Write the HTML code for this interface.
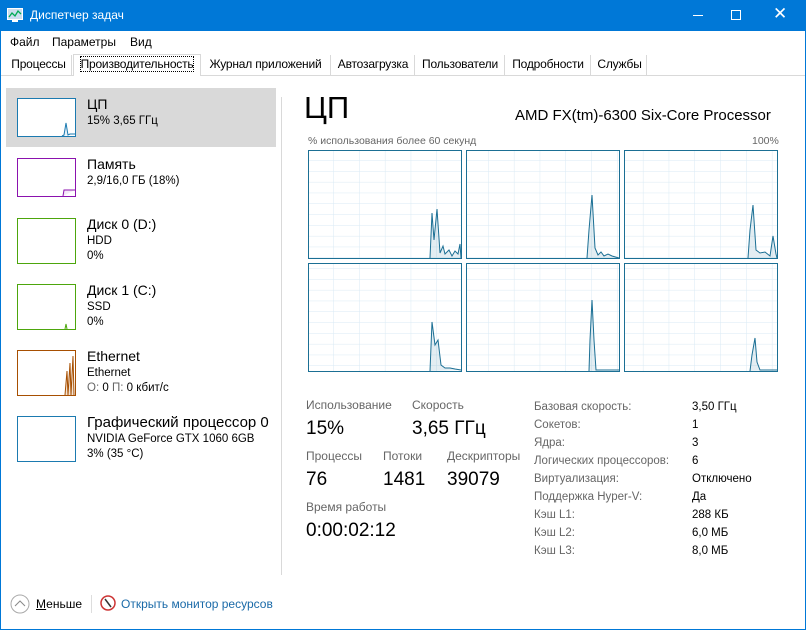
<!DOCTYPE html>
<html><head><meta charset="utf-8"><style>
*{margin:0;padding:0;box-sizing:border-box}
body{width:806px;height:630px;overflow:hidden;background:#fff;font-family:"Segoe UI","Liberation Sans",sans-serif;color:#000;position:relative;font-size:12px}
.abs{position:absolute;white-space:nowrap}
.title{left:0;top:0;width:806px;height:31px;background:#0078d7;color:#fff}
.tab{position:absolute;top:55px;height:20px;font-size:12px;padding:2px 0;text-align:center;border-right:1px solid #d9d9d9;letter-spacing:-0.2px}
.thumb{position:absolute;left:17px;width:59px;height:39px;border:1px solid}
.lt{font-size:14px}
.ls{font-size:11.5px}
.gray{color:#666}
</style></head><body>
<div class="abs title">
 <svg style="position:absolute;left:7px;top:8px" width="16" height="14"><rect x="0.5" y="0.5" width="15" height="11" fill="#cde" stroke="#fff"/><polyline points="2,9 5,5 8,8 11,3 14,6" fill="none" stroke="#0a5" stroke-width="1.3"/><rect x="5" y="12" width="6" height="2" fill="#fff"/></svg>
 <span class="abs" style="left:30px;top:8px;font-size:12px">Диспетчер задач</span>
 <span class="abs" style="left:693px;top:15px;width:10px;height:1px;background:#fff"></span>
 <span class="abs" style="left:731px;top:10px;width:10px;height:10px;border:1px solid #fff"></span>
 <span class="abs" style="left:773px;top:4px;font-size:17px">✕</span>
</div>
<div style="position:absolute;left:0;top:31px;width:1px;height:599px;background:#0078d7"></div>
<div style="position:absolute;right:0;top:31px;width:1px;height:599px;background:#0078d7"></div>
<div style="position:absolute;left:0;top:629px;width:806px;height:1px;background:#0078d7"></div>
<span class="abs" style="left:10px;top:35px">Файл</span>
<span class="abs" style="left:52px;top:35px">Параметры</span>
<span class="abs" style="left:130px;top:35px">Вид</span>
<div style="position:absolute;left:1px;top:75px;width:804px;height:1px;background:#d9d9d9"></div>
<span class="tab" style="left:6px;width:66px">Процессы</span>
<span class="tab" style="left:73px;width:128px;top:54px;height:22px;background:#fff;border:1px solid #d9d9d9;border-bottom:none"><span style="outline:1px dotted #000">Производительность</span></span>
<span class="tab" style="left:201px;width:130px">Журнал приложений</span>
<span class="tab" style="left:332px;width:83px">Автозагрузка</span>
<span class="tab" style="left:416px;width:89px">Пользователи</span>
<span class="tab" style="left:506px;width:85px">Подробности</span>
<span class="tab" style="left:593px;width:54px">Службы</span>
<div style="position:absolute;left:6px;top:88px;width:270px;height:59px;background:#d9d9d9"></div>
<div style="position:absolute;left:281px;top:97px;width:1px;height:478px;background:#d9d9d9"></div>

<div class="thumb" style="top:98px;border-color:#1b7ab0;background:#fff"><svg width="57" height="37"><polyline points="44,37 46,36 48,24 50,36 52,35 57,35" fill="#e6f0f8" stroke="#1b7ab0"/></svg></div>
<span class="abs lt" style="left:87px;top:96px">ЦП</span><span class="abs ls" style="left:87px;top:115px">15% 3,65 ГГц</span>

<div class="thumb" style="top:158px;border-color:#8b12ae"><svg width="57" height="37"><polyline points="45,37 46,31 57,31" fill="#f4e8f8" stroke="#8b12ae"/></svg></div>
<span class="abs lt" style="left:87px;top:156px">Память</span><span class="abs ls" style="left:87px;top:175px">2,9/16,0 ГБ (18%)</span>

<div class="thumb" style="top:218px;border-color:#4da60c;height:46px"></div>
<span class="abs lt" style="left:87px;top:216px">Диск 0 (D:)</span><span class="abs ls" style="left:87px;top:235px">HDD</span><span class="abs ls" style="left:87px;top:250px">0%</span>

<div class="thumb" style="top:284px;border-color:#4da60c;height:46px"><svg width="57" height="44"><polyline points="47,44 48,39 49,44" fill="none" stroke="#4da60c"/></svg></div>
<span class="abs lt" style="left:87px;top:282px">Диск 1 (C:)</span><span class="abs ls" style="left:87px;top:301px">SSD</span><span class="abs ls" style="left:87px;top:316px">0%</span>

<div class="thumb" style="top:350px;border-color:#a74f01;height:46px"><svg width="57" height="44"><polyline points="47,44 49,20 50,44 52,12 53,44 55,5 56,44" fill="#f3e3d3" stroke="#a74f01"/></svg></div>
<span class="abs lt" style="left:87px;top:348px">Ethernet</span><span class="abs ls" style="left:87px;top:367px">Ethernet</span><span class="abs ls" style="left:87px;top:382px"><span class="gray">О:</span> 0 <span class="gray">П:</span> 0 кбит/с</span>

<div class="thumb" style="top:416px;border-color:#1b7ab0;height:46px"></div>
<span class="abs lt" style="left:87px;top:414px;font-size:15px">Графический процессор 0</span><span class="abs ls" style="left:87px;top:433px">NVIDIA GeForce GTX 1060 6GB</span><span class="abs ls" style="left:87px;top:448px">3% (35 °C)</span>

<span class="abs" style="left:304px;top:90px;font-size:31px;font-weight:300">ЦП</span>
<span class="abs" style="left:515px;top:107px;font-size:15px">AMD FX(tm)-6300 Six-Core Processor</span>
<span class="abs gray" style="left:308px;top:135px;font-size:10.5px">% использования более 60 секунд</span>
<span class="abs gray" style="left:752px;top:135px;font-size:10.5px">100%</span>

<svg style="position:absolute;left:0;top:0" width="806" height="400">
<defs><pattern id="gr" x="308" y="150" width="25.8" height="10.8" patternUnits="userSpaceOnUse"><path d="M25.8 0V10.8M0 10.8H25.8" fill="none" stroke="#d9eaf4" stroke-width="1"/></pattern></defs>
<g stroke="#1b6f94" fill="url(#gr)">
<rect x="308.5" y="150.5" width="153" height="108"/><rect x="466.5" y="150.5" width="153" height="108"/><rect x="624.5" y="150.5" width="153" height="108"/>
<rect x="308.5" y="263.5" width="153" height="108"/><rect x="466.5" y="263.5" width="153" height="108"/><rect x="624.5" y="263.5" width="153" height="108"/>
</g>
<g fill="rgba(27,111,148,0.12)" stroke="#1b6f94" stroke-width="1">
<polyline points="430,258 432,213 434,240 437,209 440,253 443,246 445,254 449,250 452,256 455,251 458,254 460,244 461,258"/>
<polyline points="587,258 589,230 592,195 595,248 598,255 601,252 604,256 608,254 612,256 619,258"/>
<polyline points="748,258 750,230 753,205 756,250 760,253 765,252 770,256 773,236 776,254 777,258"/>
<polyline points="430,371 432,322 435,345 438,340 441,365 445,368 450,368 455,369 461,370"/>
<polyline points="589,371 590,340 592,300 594,340 596,370 600,370 619,370"/>
<polyline points="750,371 752,355 755,338 757,362 760,370 777,370"/>
</g>
</svg>

<span class="abs gray" style="left:306px;top:398px;font-size:12px">Использование</span>
<span class="abs" style="left:306px;top:418px;font-size:19px">15%</span>
<span class="abs gray" style="left:412px;top:398px;font-size:12px">Скорость</span>
<span class="abs" style="left:412px;top:418px;font-size:19px">3,65 ГГц</span>
<span class="abs gray" style="left:306px;top:449px;font-size:12px">Процессы</span>
<span class="abs" style="left:306px;top:469px;font-size:19px">76</span>
<span class="abs gray" style="left:383px;top:449px;font-size:12px">Потоки</span>
<span class="abs" style="left:383px;top:469px;font-size:19px">1481</span>
<span class="abs gray" style="left:447px;top:449px;font-size:12px">Дескрипторы</span>
<span class="abs" style="left:447px;top:469px;font-size:19px">39079</span>
<span class="abs gray" style="left:306px;top:500px;font-size:12px">Время работы</span>
<span class="abs" style="left:306px;top:520px;font-size:19px">0:00:02:12</span>

<div class="abs gray" style="left:534px;top:398px;font-size:11.5px;line-height:18px">Базовая скорость:<br>Сокетов:<br>Ядра:<br>Логических процессоров:<br>Виртуализация:<br>Поддержка Hyper-V:<br>Кэш L1:<br>Кэш L2:<br>Кэш L3:</div>
<div class="abs" style="left:692px;top:398px;font-size:11.5px;line-height:18px">3,50 ГГц<br>1<br>3<br>6<br>Отключено<br>Да<br>288 КБ<br>6,0 МБ<br>8,0 МБ</div>

<svg style="position:absolute;left:10px;top:594px" width="20" height="20"><circle cx="10" cy="10" r="9" fill="none" stroke="#aaa"/><polyline points="5,12 10,7 15,12" fill="none" stroke="#888"/></svg>
<span class="abs" style="left:36px;top:597px"><u>М</u>еньше</span>
<div style="position:absolute;left:91px;top:595px;width:1px;height:18px;background:#ddd"></div>
<svg style="position:absolute;left:100px;top:595px" width="16" height="16"><circle cx="8" cy="8" r="7" fill="#fff" stroke="#c33" stroke-width="1.5"/><line x1="5" y1="4" x2="11" y2="12" stroke="#333" stroke-width="1.5"/></svg>
<span class="abs" style="left:121px;top:597px;color:#1a6aa8">Открыть монитор ресурсов</span>
</body></html>
